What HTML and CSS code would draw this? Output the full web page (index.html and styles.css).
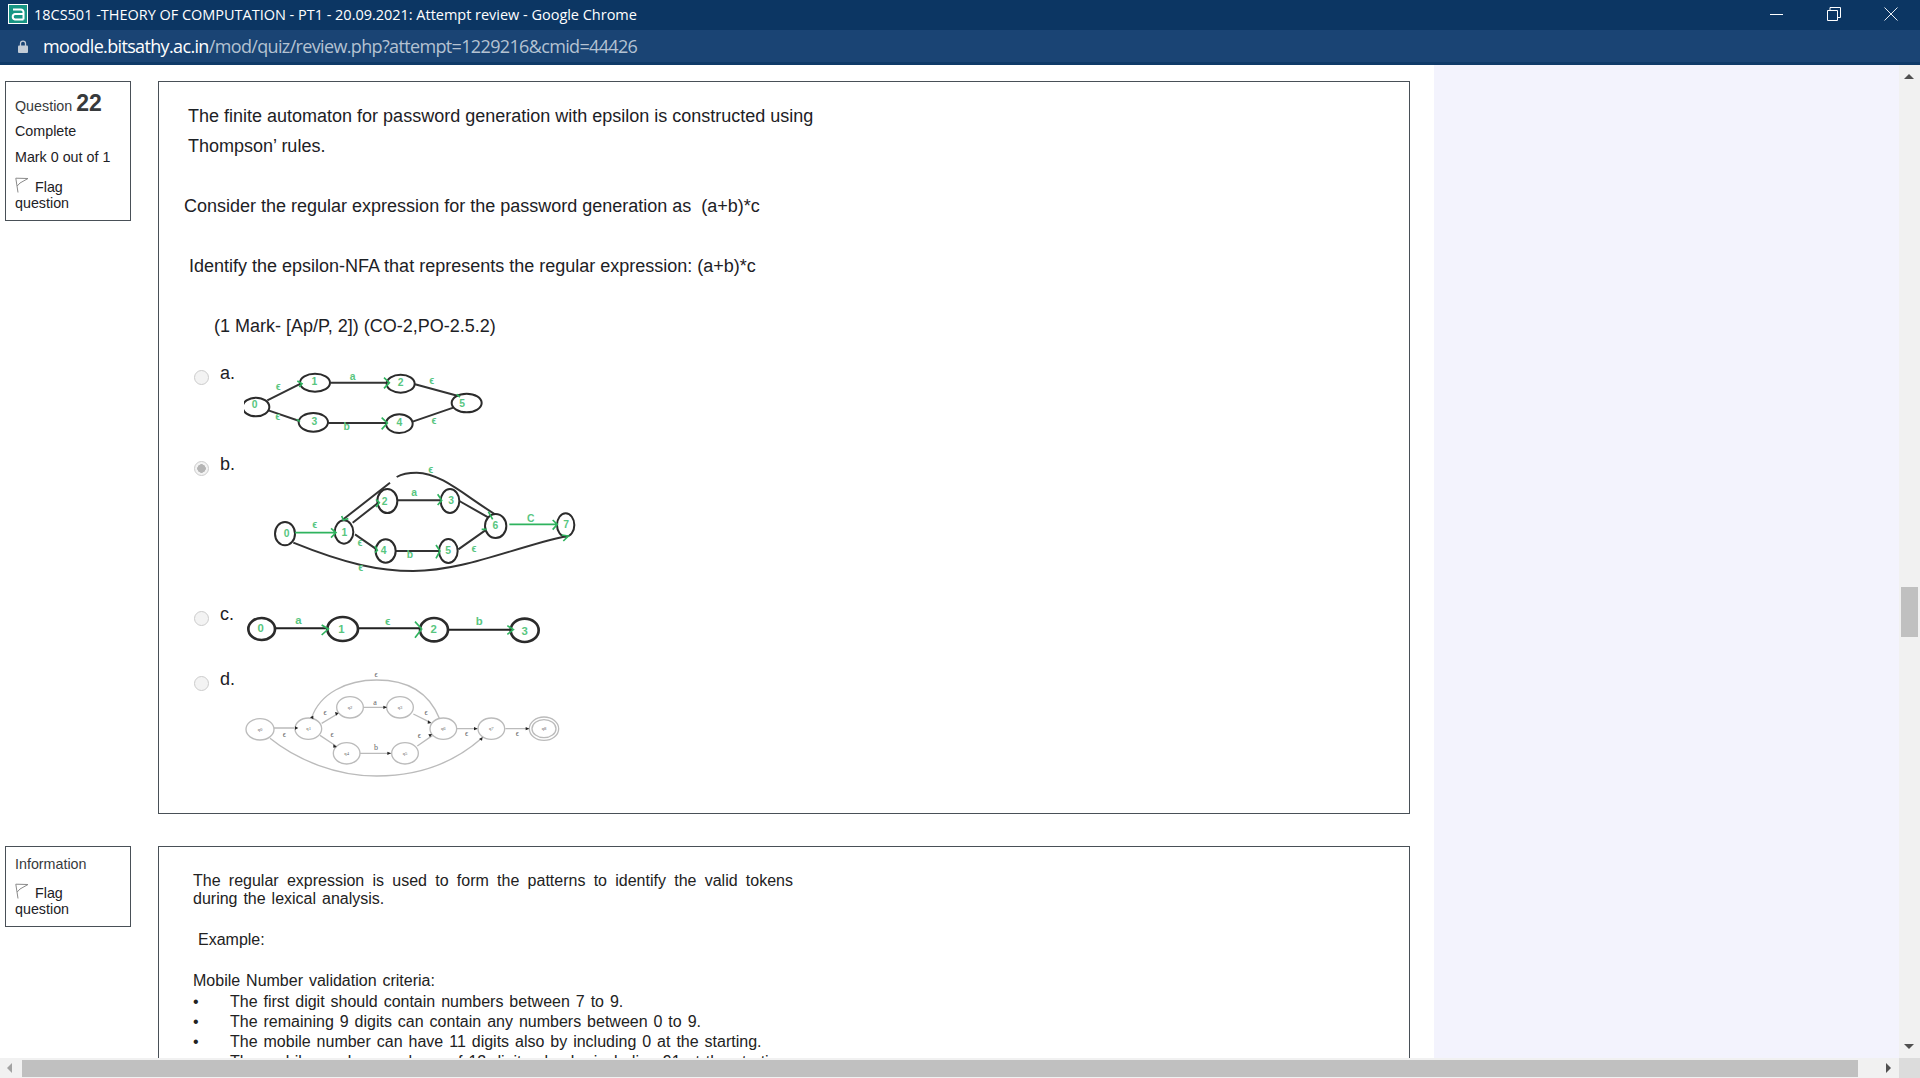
FILE: index.html
```html
<!DOCTYPE html>
<html lang="en">
<head>
  <meta charset="UTF-8">
  <title>18CS501 -THEORY OF COMPUTATION - PT1 - 20.09.2021: Attempt review - Google Chrome</title>
  <link rel="stylesheet" href="styles.css">
</head>
<body>
<div class="window">
  <!-- chrome title bar -->
  <div class="titlebar">
    <svg class="app-icon" width="20" height="20" viewBox="0 0 20 20">
      <rect x=".5" y=".5" width="19" height="19" fill="#179684" stroke="#fff"/>
      <path d="M5 5.500h8a2.500 2.500 0 0 1 2.500 2.500v7.500M15.500 10H7a2.800 2.800 0 0 0 0 5.500h8.500" fill="none" stroke="#fff" stroke-width="2"/>
    </svg>
    <span class="title-text">18CS501 -THEORY OF COMPUTATION - PT1 - 20.09.2021: Attempt review - Google Chrome</span>
    <div class="win-controls">
      <svg width="14" height="14" viewBox="0 0 14 14"><path d="M0 7.500h13" stroke="#fff" fill="none"/></svg>
      <svg width="14" height="14" viewBox="0 0 14 14"><path d="M.5 3.500h10v10H.5zM3 3.500V.5h10.500v10h-3" stroke="#fff" fill="none"/></svg>
      <svg width="14" height="14" viewBox="0 0 14 14"><path d="M.5.5l13 13M13.500.5l-13 13" stroke="#e8edf3" fill="none"/></svg>
    </div>
  </div>
  <div class="urlbar">
    <svg class="lock" width="10" height="13" viewBox="0 0 10 13">
      <path d="M2.500 6V3.600a2.500 2.500 0 0 1 5 0V6" fill="none" stroke="#c3ccd6" stroke-width="1.300"/>
      <rect y="5.500" width="10" height="7.500" rx="1" fill="#c3ccd6"/>
    </svg>
    <span class="url-host">moodle.bitsathy.ac.in</span><span class="url-path">/mod/quiz/review.php?attempt=1229216&amp;cmid=44426</span>
  </div>

  <div class="viewport">
    <div class="page">
      <div class="page-main">

        <!-- Question 22 -->
        <div class="que que-first">
          <div class="info">
            <div class="qno-line">Question <span class="qno">22</span></div>
            <div class="state">Complete</div>
            <div class="grade">Mark 0 out of 1</div>
            <div class="flag">
              <svg class="flag-icon" width="14" height="16" viewBox="0 0 14 16"><path d="M3 15.500L.8 1.200 13 1.500 5 6 2.200 9" fill="none" stroke="#8a8a8a"/></svg>
              Flag<br>question
            </div>
          </div>
          <div class="content content-q22">
            <p class="q-line q-1">The finite automaton for password generation with epsilon is constructed using<br>Thompson’ rules.</p>
            <p class="q-line q-2">Consider the regular expression for the password generation as&nbsp; (a+b)*c</p>
            <p class="q-line q-3">Identify the epsilon-NFA that represents the regular expression: (a+b)*c</p>
            <p class="q-line q-4">(1 Mark- [Ap/P, 2]) (CO-2,PO-2.5.2)</p>

            <div class="option opt-a">
              <input type="radio" class="radio" name="q22">
              <span class="opt-label">a.</span>
              <svg class="nfa" width="260" height="80" viewBox="192 30 780 240">
                <g class="edge">
                  <path d="M262 148L362 98M452 95H625M705 100L835 135M265 178L358 210M445 216H620M698 212L820 170"/>
                </g>
                <g class="node">
                  <ellipse cx="228" cy="168" rx="40" ry="28"/><ellipse cx="405" cy="95" rx="45" ry="27"/>
                  <ellipse cx="662" cy="98" rx="42" ry="27"/><ellipse cx="400" cy="214" rx="44" ry="28"/>
                  <ellipse cx="658" cy="218" rx="40" ry="28"/><ellipse cx="860" cy="156" rx="45" ry="28"/>
                </g>
                <g class="arrow">
                  <path d="M612 80L628 95 612 112M605 200L622 216 605 235M352 90L366 98 358 108M350 205L360 212M830 130L840 138"/>
                </g>
                <g class="lbl">
                  <text x="224" y="170">0</text><text x="403" y="103">1</text><text x="662" y="105">2</text>
                  <text x="403" y="222">3</text><text x="658" y="226">4</text><text x="846" y="168">5</text>
                  <text x="295" y="116">ϵ</text><text x="293" y="206">ϵ</text><text x="518" y="86">a</text>
                  <text x="500" y="236">b</text><text x="755" y="98">ϵ</text><text x="762" y="220">ϵ</text>
                </g>
              </svg>
            </div>

            <div class="option opt-b">
              <input type="radio" class="radio" name="q22" checked>
              <span class="opt-label">b.</span>
              <svg class="nfa" width="350" height="125" viewBox="192 303 1050 375">
                <g class="edge">
                  <path d="M518 515L595 455M525 550L590 595M652 448H785M648 600H780M838 450L935 505M835 595L920 535"/>
                  <path d="M340 575C500 640 600 660 700 660C850 660 1000 590 1160 555"/>
                  <path d="M945 490C850 430 780 365 710 365C680 365 660 372 650 378M630 395L490 505"/>
                </g>
                <g class="node">
                  <ellipse cx="315" cy="548" rx="30" ry="35"/><ellipse cx="492" cy="543" rx="28" ry="35"/>
                  <ellipse cx="622" cy="450" rx="30" ry="36"/><ellipse cx="810" cy="450" rx="28" ry="36"/>
                  <ellipse cx="617" cy="600" rx="30" ry="35"/><ellipse cx="805" cy="600" rx="28" ry="36"/>
                  <ellipse cx="947" cy="525" rx="32" ry="36"/><ellipse cx="1157" cy="522" rx="26" ry="35"/>
                </g>
                <g class="arrow">
                  <path d="M345 545H465M988 520H1130M453 532L468 545 453 560M1118 507L1132 520 1118 536"/>
                  <path d="M588 445L598 455 588 468M773 430L785 448 773 462M925 482L938 505M905 535L920 535M768 582L780 600 768 622M585 585L592 598 585 605M485 495L490 507 505 503M1150 570L1165 555 1145 552"/>
                </g>
                <g class="lbl">
                  <text x="320" y="558">0</text><text x="493" y="556">1</text><text x="614" y="462">2</text>
                  <text x="813" y="460">3</text><text x="611" y="610">4</text><text x="804" y="610">5</text>
                  <text x="946" y="535">6</text><text x="1158" y="532">7</text>
                  <text x="404" y="532">ϵ</text><text x="702" y="436">a</text><text x="752" y="366">ϵ</text>
                  <text x="1052" y="514">C</text><text x="540" y="586">ϵ</text><text x="690" y="622">b</text>
                  <text x="882" y="604">ϵ</text><text x="542" y="660">ϵ</text>
                </g>
              </svg>
            </div>

            <div class="option opt-c">
              <input type="radio" class="radio" name="q22">
              <span class="opt-label">c.</span>
              <svg class="nfa" width="310" height="50" viewBox="192 39 930 150">
                <g class="edge edge-thick">
                  <path d="M285 118H440M535 118H720M805 122H995"/>
                </g>
                <g class="node node-thick">
                  <ellipse cx="245" cy="120" rx="40" ry="33"/><ellipse cx="488" cy="120" rx="46" ry="36"/>
                  <ellipse cx="762" cy="122" rx="42" ry="35"/><ellipse cx="1034" cy="124" rx="42" ry="35"/>
                </g>
                <g class="arrow">
                  <path d="M425 108L445 120 425 138M705 98L725 120 705 146M982 110L1000 122 982 136"/>
                </g>
                <g class="lbl lbl-big">
                  <text x="242" y="130">0</text><text x="484" y="131">1</text><text x="761" y="132">2</text><text x="1034" y="137">3</text>
                  <text x="355" y="104">a</text><text x="623" y="107">ϵ</text><text x="898" y="107">b</text>
                </g>
              </svg>
            </div>

            <div class="option opt-d">
              <input type="radio" class="radio" name="q22">
              <span class="opt-label">d.</span>
              <svg class="nfa" width="330" height="115" viewBox="192 231 990 345">
                <g class="edge-gray">
                  <path d="M282 414H342M425 400L472 372M420 436L468 468M550 352H620M540 490H635M700 372L752 398M712 468L758 436M830 416H892M976 416H1047"/>
                  <path d="M778 385C740 290 660 270 590 270C500 270 420 310 395 383"/>
                  <path d="M270 445C350 510 470 558 590 558C710 558 820 520 905 445"/>
                </g>
                <g class="node-gray">
                  <ellipse cx="240" cy="418" rx="42" ry="32"/><ellipse cx="385" cy="416" rx="40" ry="32"/>
                  <ellipse cx="510" cy="352" rx="40" ry="32"/><ellipse cx="660" cy="352" rx="40" ry="32"/>
                  <ellipse cx="500" cy="490" rx="40" ry="32"/><ellipse cx="675" cy="490" rx="40" ry="32"/>
                  <ellipse cx="790" cy="416" rx="40" ry="32"/><ellipse cx="934" cy="416" rx="40" ry="32"/>
                  <ellipse cx="1092" cy="416" rx="44" ry="35"/><ellipse cx="1092" cy="416" rx="36" ry="27"/>
                </g>
                <g class="tip">
                  <path d="M345 409l10 5-10 5zM465 366l11 3-8 8zM460 463l11 8-11 2zM610 347l11 5-11 5zM622 485l11 5-11 5zM744 391l10 8-11 2zM745 433l11-1-6 10zM882 411l11 5-11 5zM1037 411l11 5-11 5zM390 382l10-5 0 11zM897 447l11-6-2 11z"/>
                </g>
                <g class="lbl-gray">
                  <text x="240" y="422">q0</text><text x="386" y="420">q1</text><text x="510" y="356">q2</text>
                  <text x="660" y="356">q3</text><text x="500" y="494">q4</text><text x="675" y="494">q5</text>
                  <text x="790" y="420">q6</text><text x="934" y="420">q7</text><text x="1092" y="420">q8</text>
                </g>
                <g class="lbl-letter">
                  <text x="588" y="262">ϵ</text><text x="435" y="374">ϵ</text><text x="585" y="344">a</text>
                  <text x="738" y="376">ϵ</text><text x="456" y="442">ϵ</text><text x="588" y="480">b</text>
                  <text x="718" y="444">ϵ</text><text x="313" y="440">ϵ</text><text x="860" y="438">ϵ</text>
                  <text x="1012" y="438">ϵ</text>
                </g>
              </svg>
            </div>
          </div>
        </div>

        <!-- Information -->
        <div class="que">
          <div class="info info-small">
            <div class="state state-first">Information</div>
            <div class="flag">
              <svg class="flag-icon" width="14" height="16" viewBox="0 0 14 16"><path d="M3 15.500L.8 1.200 13 1.500 5 6 2.200 9" fill="none" stroke="#8a8a8a"/></svg>
              Flag<br>question
            </div>
          </div>
          <div class="content content-info">
            <p class="just">The regular expression is used to form the patterns to identify the valid tokens</p>
            <p>during the lexical analysis.</p>
            <p class="example">Example:</p>
            <p class="criteria">Mobile Number validation criteria:</p>
            <ul class="rules">
              <li>The first digit should contain numbers between 7 to 9.</li>
              <li>The remaining 9 digits can contain any numbers between 0 to 9.</li>
              <li>The mobile number can have 11 digits also by including 0 at the starting.</li>
              <li>The mobile number can have of 12 digits also by including 91 at the starting.</li>
            </ul>
          </div>
        </div>

      </div>
      <div class="page-side"></div>
    </div>

    <!-- vertical scrollbar -->
    <div class="vscroll">
      <span class="tri tri-up"></span>
      <span class="vthumb"></span>
      <span class="tri tri-down"></span>
    </div>
  </div>

  <!-- horizontal scrollbar -->
  <div class="hscroll">
    <span class="tri tri-left"></span>
    <span class="hthumb"></span>
    <span class="tri tri-right"></span>
    <span class="corner"></span>
  </div>
</div>
</body>
</html>
```

FILE: styles.css
```css
html,
body {
  margin: 0;
  height: 100%;
  overflow: hidden;
}

body {
  font-family: "Liberation Sans", Arial, sans-serif;
  color: #1d2125;
  background-color: #fff;
}

.window {
  height: 1078px;
  display: flex;
  flex-direction: column;
}

.titlebar {
  height: 30px;
  flex: none;
  display: flex;
  align-items: center;
  padding-left: 8px;
  padding-bottom: 2px;
  box-sizing: border-box;
  background-color: #0c3663;
  color: #fff;
  font-family: "Open Sans", sans-serif;
  font-size: 14.500px;
  letter-spacing: -0.020px;
}

.app-icon {
  margin-right: 6px;
}

.win-controls {
  margin-left: auto;
  display: flex;
  gap: 43px;
  padding-right: 22px;
}

.urlbar {
  height: 32px;
  flex: none;
  display: flex;
  align-items: center;
  padding-left: 18px;
  background-color: #1a4474;
  border-bottom: 3px solid #0f3a68;
  font-family: "Open Sans", sans-serif;
  font-size: 18px;
  letter-spacing: -0.650px;
}

.lock {
  margin-right: 15px;
}

.url-host {
  color: #fff;
}

.url-path {
  color: #b4c2d2;
}

.viewport {
  flex: 1;
  min-height: 0;
  display: flex;
}

.page {
  flex: 1;
  min-width: 0;
  display: flex;
  overflow: hidden;
}

.page-main {
  width: 1434px;
  flex: none;
  background-color: #fff;
}

.page-side {
  flex: 1;
  background-color: #f3f3fd;
}

.que {
  display: flex;
  align-items: flex-start;
  gap: 27px;
  padding-left: 5px;
  margin-bottom: 32px;
}

.que-first {
  padding-top: 16px;
}

.info {
  width: 126px;
  height: 140px;
  flex: none;
  box-sizing: border-box;
  padding: 8px 9px 0;
  border: 1px solid #495057;
  font-size: 14.300px;
  color: #1d2125;
}

.info-small {
  height: 81px;
}

.qno-line {
  height: 30px;
  color: #373a3c;
}

.qno {
  font-size: 23px;
  font-weight: bold;
}

.state {
  margin-top: 3px;
  height: 26px;
}

.state-first {
  margin-top: 1px;
  height: 25px;
  color: #373a3c;
}

.grade {
  height: 26px;
}

.flag {
  line-height: 16px;
  margin-top: 2px;
}

.flag-icon {
  vertical-align: -1px;
  margin-right: 2px;
}

.content {
  width: 1252px;
  flex: none;
  box-sizing: border-box;
  border: 1px solid #495057;
}

.content-q22 {
  height: 733px;
  padding-left: 29px;
}

.q-line {
  margin: 0;
  font-size: 18px;
  line-height: 30px;
  color: #1d2125;
}

.q-1 {
  padding-top: 19px;
}

.q-2 {
  margin-top: 30px;
  margin-left: -4px;
}

.q-3 {
  margin-top: 30px;
  margin-left: 1px;
}

.q-4 {
  margin-top: 30px;
  margin-left: 26px;
}

.option {
  display: flex;
  align-items: flex-start;
  margin-left: 6px;
}

.radio {
  appearance: none;
  width: 15px;
  height: 15px;
  margin: 9px 0 0;
  flex: none;
  border: 1px solid #ccc;
  border-radius: 50%;
  background-color: #f3f3f3;
  box-sizing: border-box;
}

.radio:checked {
  background: radial-gradient(circle, #b5b5b5 0 4px, #f3f3f3 4.500px);
}

.opt-label {
  width: 24px;
  margin-left: 11px;
  font-size: 18px;
  line-height: 24px;
}

.nfa {
  display: block;
  flex: none;
}

.opt-a {
  margin-top: 20px;
}

.opt-b {
  margin-top: 11px;
}

.opt-c {
  margin-top: 25px;
}

.opt-d {
  margin-top: 15px;
}

.edge path,
.edge-thick path {
  fill: none;
  stroke: #333;
  stroke-width: 6;
}

.edge-thick path {
  stroke: #222;
}

.node ellipse,
.node-thick ellipse {
  fill: #fff;
  stroke: #2b2b2b;
  stroke-width: 6;
}

.node-thick ellipse {
  stroke-width: 8;
}

.arrow path {
  fill: none;
  stroke: #2fb35e;
  stroke-width: 5;
}

.lbl text {
  fill: #58c67f;
  font-size: 31px;
  font-weight: bold;
  text-anchor: middle;
}

.lbl-big text {
  font-size: 34px;
}

.edge-gray path {
  fill: none;
  stroke: #bbb;
  stroke-width: 4;
}

.node-gray ellipse {
  fill: #fff;
  stroke: #bbb;
  stroke-width: 4;
}

.tip path {
  fill: #222;
}

.lbl-gray text {
  fill: #666;
  font-family: "Liberation Serif", serif;
  font-size: 14px;
  text-anchor: middle;
}

.lbl-letter text {
  fill: #666;
  font-family: "Liberation Serif", serif;
  font-size: 24px;
  text-anchor: middle;
}

.content-info {
  height: 300px;
  padding: 25px 0 0 34px;
  font-size: 16px;
  line-height: 17.500px;
  word-spacing: 1.500px;
  color: #222;
}

.content-info p {
  margin: 0;
}

.just {
  width: 600px;
  text-align: justify;
  text-align-last: justify;
}

.example {
  padding: 24px 0 0 5px;
}

.criteria {
  padding-top: 23px;
}

.rules {
  margin: 3px 0 0;
  padding: 0;
  list-style: none;
}

.rules li {
  display: flex;
  line-height: 20px;
  white-space: nowrap;
}

.rules li::before {
  content: "•";
  width: 37px;
  flex: none;
}

.vscroll {
  width: 21px;
  flex: none;
  background-color: #f1f1f1;
  position: relative;
}

.vthumb {
  position: absolute;
  left: 2px;
  top: 522px;
  width: 17px;
  height: 50px;
  background-color: #c0c0c0;
}

.tri {
  width: 0;
  height: 0;
  display: block;
  flex: none;
}

.tri-up,
.tri-down {
  position: absolute;
  left: 5px;
}

.tri-up {
  top: 9px;
  border-left: 5px solid transparent;
  border-right: 5px solid transparent;
  border-bottom: 5px solid #505050;
}

.tri-down {
  bottom: 9px;
  border-left: 5px solid transparent;
  border-right: 5px solid transparent;
  border-top: 5px solid #505050;
}

.hscroll {
  height: 20px;
  flex: none;
  display: flex;
  align-items: center;
  background-color: #f1f1f1;
}

.tri-left {
  margin-left: 7px;
  border-top: 5px solid transparent;
  border-bottom: 5px solid transparent;
  border-right: 5px solid #a3a3a3;
}

.hthumb {
  width: 1836px;
  height: 17px;
  margin-left: 10px;
  background-color: #c0c0c0;
}

.tri-right {
  margin-left: 28px;
  border-top: 5px solid transparent;
  border-bottom: 5px solid transparent;
  border-left: 5px solid #505050;
}

.corner {
  width: 21px;
  height: 20px;
  margin-left: auto;
  background-color: #dcdcdc;
}
```
